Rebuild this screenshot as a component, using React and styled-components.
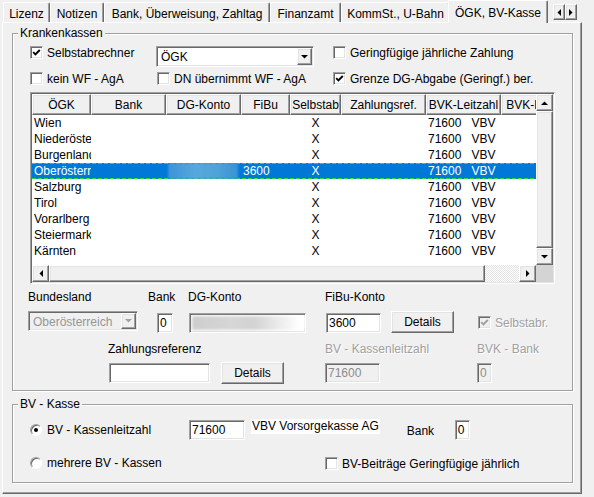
import React from "react";
import styled, { createGlobalStyle, css } from "styled-components";

const GlobalStyle = createGlobalStyle`
  * { box-sizing: border-box; }
  html, body { margin: 0; padding: 0; background: #f0f0f0; }
  body {
    font-family: "Liberation Sans", Arial, sans-serif;
    font-size: 12px;
    color: #000;
  }
`;

const sunken = css`
  border-style: solid;
  border-width: 1px;
  border-color: #a0a0a0 #fff #fff #a0a0a0;
  box-shadow: inset 1px 1px #696969, inset -1px -1px #e3e3e3;
`;

const raised = css`
  border-style: solid;
  border-width: 1px;
  border-color: #fff #696969 #696969 #fff;
  box-shadow: inset -1px -1px #a0a0a0, inset 1px 1px #e3e3e3;
`;

// margin/width offsets shared by the form controls
const place = css`
  flex: none;
  margin-left: ${(p) => p.$ml || 0}px;
  margin-top: ${(p) => p.$mt || 0}px;
  ${(p) => p.$w && `width: ${p.$w}px;`}
`;

const disabledText = css`
  color: #a0a0a0;
  text-shadow: 1px 1px #fff;
`;

const Window = styled.div`
  width: 594px;
  height: 497px;
  overflow: hidden;
  background: #f0f0f0;
`;

const TabStrip = styled.div`
  display: flex;
  align-items: flex-end;
  height: 22px;
  padding-left: 3px;
  position: relative;
  z-index: 1;
`;

const Tab = styled.div`
  flex: none;
  width: ${(p) => p.$w}px;
  height: ${(p) => (p.$active ? 23 : 20)}px;
  margin: ${(p) => (p.$active ? "0 0 -1px -2px" : "0")};
  padding-top: 2px;
  display: flex;
  align-items: center;
  justify-content: center;
  white-space: nowrap;
  background: #f0f0f0;
  border-top: 1px solid #fff;
  border-left: 1px solid #fff;
  border-right: 1px solid #696969;
  box-shadow: inset -1px 0 #a0a0a0;
  border-radius: 2px 2px 0 0;
  position: relative;
  z-index: ${(p) => (p.$active ? 2 : 1)};
`;

const TabArrows = styled.div`
  display: flex;
  margin: 0 0 2px 5px;
`;

const TabArrow = styled.div`
  width: 12px;
  height: 16px;
  ${raised};
  background: #f0f0f0;
  display: flex;
  align-items: center;
  justify-content: center;
`;

const Page = styled.div`
  margin-left: 2px;
  width: 580px;
  height: 472px;
  padding: 3px 0 0 9px;
  border-top: 1px solid #fff;
  border-left: 1px solid #fff;
  border-right: 1px solid #696969;
  border-bottom: 1px solid #696969;
  box-shadow: inset -1px -1px #a0a0a0;
`;

const Group = styled.fieldset`
  margin: ${(p) => p.$mt || 0}px 0 0;
  padding: 0 0 ${(p) => p.$pb}px;
  width: 561px;
  min-width: 0;
  border: 1px solid #a0a0a0;
  box-shadow: 1px 1px #fff, inset 1px 1px #fff;
`;

const Legend = styled.legend`
  margin-left: 5px;
  padding: 0 2px;
  line-height: 14px;
  background: #f0f0f0;
`;

const Row = styled.div`
  display: flex;
  align-items: flex-start;
  margin-top: ${(p) => p.$mt || 0}px;
`;

const Caption = styled.span`
  ${place};
  line-height: 14px;
  white-space: nowrap;
  ${(p) => p.$disabled && disabledText};
`;

const CheckField = styled.div`
  ${place};
  display: flex;
  align-items: center;
  gap: ${(p) => (p.$radio ? 5 : 4)}px;
  height: 13px;
  white-space: nowrap;
  ${(p) => p.$disabled && disabledText};
`;

const Box = styled.span`
  width: 13px;
  height: 13px;
  flex: none;
  ${sunken};
  background: ${(p) => (p.$disabled ? "#f0f0f0" : "#fff")};
  display: flex;
  align-items: center;
  justify-content: center;
`;

const RadioCircle = styled.span`
  width: 12px;
  height: 12px;
  flex: none;
  border-radius: 50%;
  border: 1px solid;
  border-color: #a0a0a0 #fff #fff #a0a0a0;
  box-shadow: inset 1px 1px #696969;
  background: #fff;
  display: flex;
  align-items: center;
  justify-content: center;
`;

const Dot = styled.span`
  width: 4px;
  height: 4px;
  border-radius: 50%;
  background: #000;
`;

const ComboBox = styled.div`
  ${place};
  height: ${(p) => p.$h}px;
  ${sunken};
  padding: 1px;
  display: flex;
  background: ${(p) => (p.$disabled ? "#f0f0f0" : "#fff")};
  color: ${(p) => (p.$disabled ? "#969696" : "#000")};
`;

const ComboValue = styled.span`
  flex: 1;
  padding: 1px 0 0 3px;
  display: flex;
  align-items: center;
  white-space: nowrap;
  overflow: hidden;
`;

const DropButton = styled.span`
  width: 15px;
  flex: none;
  ${raised};
  background: #f0f0f0;
  display: flex;
  align-items: center;
  justify-content: center;
`;

const TextBox = styled.div`
  ${place};
  height: 20px;
  ${sunken};
  padding: 1px 0 0 2px;
  line-height: 17px;
  white-space: nowrap;
  overflow: hidden;
  background: ${(p) => (p.$disabled ? "#f0f0f0" : "#fff")};
  color: ${(p) => (p.$disabled ? "#8c8c8c" : "#000")};
`;

const BlurFill = styled.span`
  display: block;
  height: 14px;
  margin-top: 1px;
  width: 100%;
  background: linear-gradient(90deg, #cdcdcd 0%, #d6d6d6 35%, #d2d2d2 55%, #fff 95%);
  filter: blur(1.5px);
`;

const PushButton = styled.div`
  ${place};
  height: 22px;
  ${raised};
  background: #f0f0f0;
  display: flex;
  align-items: center;
  justify-content: center;
`;

const InfoLabel = styled.span`
  ${place};
  height: 15px;
  line-height: 15px;
  padding: 0 1px;
  background: #fff;
  white-space: nowrap;
`;

/* list view */
const ListView = styled.div`
  margin: 7px 0 0 17px;
  width: 525px;
  height: 192px;
  ${sunken};
  padding: 1px;
  background: #fff;
  display: grid;
  grid-template-columns: 1fr 17px;
  grid-template-rows: 1fr 17px;
`;

const TableArea = styled.div`
  overflow: hidden;
  min-width: 0;
`;

const HeaderRow = styled.div`
  display: flex;
  height: 21px;
`;

const HeaderCell = styled.div`
  flex: 0 0 ${(p) => p.$w}px;
  ${raised};
  background: #f0f0f0;
  display: flex;
  align-items: center;
  justify-content: center;
  white-space: nowrap;
  overflow: hidden;
`;

const DataRow = styled.div`
  display: flex;
  height: 16px;
  line-height: 16px;
  ${(p) =>
    p.$selected &&
    css`
      color: #fff;
      background: repeating-linear-gradient(90deg, #22e022 0 4px, transparent 4px 6px) top / 100% 1px no-repeat,
        repeating-linear-gradient(90deg, #22e022 0 4px, transparent 4px 6px) bottom / 100% 1px no-repeat, #0078d7;
    `}
`;

const Cell = styled.div`
  flex: 0 0 ${(p) => p.$w}px;
  padding-left: ${(p) => (p.$center ? 0 : 2)}px;
  text-align: ${(p) => (p.$center ? "center" : "left")};
  white-space: nowrap;
  overflow: hidden;
`;

const Gap = styled.span`
  margin-left: 10px;
`;

const BlurPatch = styled.span`
  display: block;
  width: 70px;
  height: 16px;
  background: linear-gradient(90deg, #3d93da, #58a8dc 40%, #4fa3d8 70%, #3a92d6);
  filter: blur(1px);
`;

const VScroll = styled.div`
  display: flex;
  flex-direction: column;
`;

const HScroll = styled.div`
  display: flex;
`;

const ScrollButton = styled.div`
  flex: 0 0 17px;
  height: 17px;
  ${raised};
  background: #f0f0f0;
  display: flex;
  align-items: center;
  justify-content: center;
`;

const Thumb = styled.div`
  flex: ${(p) => (p.$len ? `0 0 ${p.$len}px` : "1")};
  ${raised};
  background: #f0f0f0;
`;

const Track = styled.div`
  flex: 1;
  background: repeating-conic-gradient(#fff 0% 25%, #e3e3e3 0% 50%) 0 0 / 2px 2px;
`;

const Corner = styled.div`
  background: #d4d4d4;
`;

const Arrow = ({ dir, color = "#000" }) => {
  const vertical = dir === "up" || dir === "down";
  const pts = {
    up: "0,4 7,4 3.5,0.5",
    down: "0,0 7,0 3.5,3.5",
    left: "4,0 4,7 0.5,3.5",
    right: "0,0 0,7 3.5,3.5",
  }[dir];
  return (
    <svg width={vertical ? 7 : 4} height={vertical ? 4 : 7} viewBox={vertical ? "0 0 7 4" : "0 0 4 7"}>
      <polygon points={pts} fill={color} />
    </svg>
  );
};

const Tick = ({ color }) => (
  <svg width="9" height="9" viewBox="0 0 9 9">
    <path d="M1.2 4.2 L3.4 6.4 L7.8 2" fill="none" stroke={color} strokeWidth="1.9" />
  </svg>
);

const Check = ({ checked, disabled, children, ...rest }) => (
  <CheckField $disabled={disabled} {...rest}>
    <Box $disabled={disabled}>{checked && <Tick color={disabled ? "#a0a0a0" : "#000"} />}</Box>
    {children}
  </CheckField>
);

const Radio = ({ checked, children, ...rest }) => (
  <CheckField $radio {...rest}>
    <RadioCircle>{checked && <Dot />}</RadioCircle>
    {children}
  </CheckField>
);

const columns = [
  { title: "ÖGK", w: 59 },
  { title: "Bank", w: 75 },
  { title: "DG-Konto", w: 75 },
  { title: "FiBu", w: 49 },
  { title: "Selbstab", w: 51 },
  { title: "Zahlungsref.", w: 85 },
  { title: "BVK-Leitzahl", w: 75 },
  { title: "BVK-Bank", w: 66 },
];

const kassen = [
  "Wien",
  "Niederösterreich",
  "Burgenland",
  "Oberösterreich",
  "Salzburg",
  "Tirol",
  "Vorarlberg",
  "Steiermark",
  "Kärnten",
];

const tabs = [
  { label: "Lizenz", w: 47 },
  { label: "Notizen", w: 54 },
  { label: "Bank, Überweisung, Zahltag", w: 166 },
  { label: "Finanzamt", w: 71 },
  { label: "KommSt., U-Bahn", w: 109 },
  { label: "ÖGK, BV-Kasse", w: 100, active: true },
];

const KassenList = () => (
  <ListView>
    <TableArea>
      <HeaderRow>
        {columns.map((c) => (
          <HeaderCell key={c.title} $w={c.w}>
            {c.title}
          </HeaderCell>
        ))}
      </HeaderRow>
      {kassen.map((name, i) => {
        const sel = i === 3;
        return (
          <DataRow key={name} $selected={sel}>
            <Cell $w={59}>{name}</Cell>
            <Cell $w={75} />
            <Cell $w={75}>{sel && <BlurPatch />}</Cell>
            <Cell $w={49}>{sel ? "3600" : ""}</Cell>
            <Cell $w={51} $center>
              X
            </Cell>
            <Cell $w={85} />
            <Cell $w={75}>
              71600<Gap>VBV</Gap>
            </Cell>
            <Cell $w={66} />
          </DataRow>
        );
      })}
    </TableArea>
    <VScroll>
      <ScrollButton>
        <Arrow dir="up" />
      </ScrollButton>
      <Thumb />
      <ScrollButton>
        <Arrow dir="down" />
      </ScrollButton>
    </VScroll>
    <HScroll>
      <ScrollButton>
        <Arrow dir="left" />
      </ScrollButton>
      <Thumb $len={436} />
      <Track />
      <ScrollButton>
        <Arrow dir="right" />
      </ScrollButton>
    </HScroll>
    <Corner />
  </ListView>
);

export default function App() {
  return (
    <Window>
      <GlobalStyle />
      <TabStrip>
        {tabs.map((t) => (
          <Tab key={t.label} $w={t.w} $active={t.active}>
            {t.label}
          </Tab>
        ))}
        <TabArrows>
          <TabArrow>
            <Arrow dir="left" />
          </TabArrow>
          <TabArrow>
            <Arrow dir="right" />
          </TabArrow>
        </TabArrows>
      </TabStrip>

      <Page>
        <Group $pb={6}>
          <Legend>Krankenkassen</Legend>
          <Row $mt={6}>
            <Check checked $ml={17} $w={126}>
              Selbstabrechner
            </Check>
            <ComboBox $w={158} $h={21}>
              <ComboValue>ÖGK</ComboValue>
              <DropButton>
                <Arrow dir="down" />
              </DropButton>
            </ComboBox>
            <Check $ml={19}>Geringfügige jährliche Zahlung</Check>
          </Row>
          <Row $mt={5}>
            <Check $ml={17} $w={127}>
              kein WF - AgA
            </Check>
            <Check $w={176}>DN übernimmt WF - AgA</Check>
            <Check checked>Grenze DG-Abgabe (Geringf.) ber.</Check>
          </Row>

          <KassenList />

          <Row $mt={6}>
            <Caption $ml={15} $w={120}>
              Bundesland
            </Caption>
            <Caption $w={40}>Bank</Caption>
            <Caption $w={137}>DG-Konto</Caption>
            <Caption>FiBu-Konto</Caption>
          </Row>
          <Row $mt={7}>
            <ComboBox $disabled $ml={15} $w={110} $h={20}>
              <ComboValue>Oberösterreich</ComboValue>
              <DropButton>
                <Arrow dir="down" color="#a0a0a0" />
              </DropButton>
            </ComboBox>
            <TextBox $ml={19} $mt={2} $w={16}>
              0
            </TextBox>
            <TextBox $ml={16} $mt={2} $w={117}>
              <BlurFill />
            </TextBox>
            <TextBox $ml={20} $mt={2} $w={55}>
              3600
            </TextBox>
            <PushButton $ml={10} $w={63}>
              Details
            </PushButton>
            <Check checked disabled $ml={24} $mt={5}>
              Selbstabr.
            </Check>
          </Row>
          <Row $mt={9}>
            <Caption $ml={95} $w={217}>
              Zahlungsreferenz
            </Caption>
            <Caption $disabled $w={152}>
              BV - Kassenleitzahl
            </Caption>
            <Caption $disabled>BVK - Bank</Caption>
          </Row>
          <Row $mt={6}>
            <TextBox $ml={96} $mt={1} $w={101} />
            <PushButton $ml={11} $w={63}>
              Details
            </PushButton>
            <TextBox $disabled $ml={41} $mt={1} $w={55}>
              71600
            </TextBox>
            <TextBox $disabled $ml={97} $mt={1} $w={15}>
              0
            </TextBox>
          </Row>
        </Group>

        <Group $mt={6} $pb={12}>
          <Legend>BV - Kasse</Legend>
          <Row $mt={8}>
            <Radio checked $ml={17} $mt={4} $w={159}>
              BV - Kassenleitzahl
            </Radio>
            <TextBox $mt={1} $w={56}>
              71600
            </TextBox>
            <InfoLabel $ml={6}>VBV Vorsorgekasse AG</InfoLabel>
            <Caption $ml={27} $mt={5} $w={48}>
              Bank
            </Caption>
            <TextBox $mt={1} $w={15}>
              0
            </TextBox>
          </Row>
          <Row $mt={16}>
            <Radio $ml={17} $w={295}>
              mehrere BV - Kassen
            </Radio>
            <Check $mt={1}>BV-Beiträge Geringfügige jährlich</Check>
          </Row>
        </Group>
      </Page>
    </Window>
  );
}
